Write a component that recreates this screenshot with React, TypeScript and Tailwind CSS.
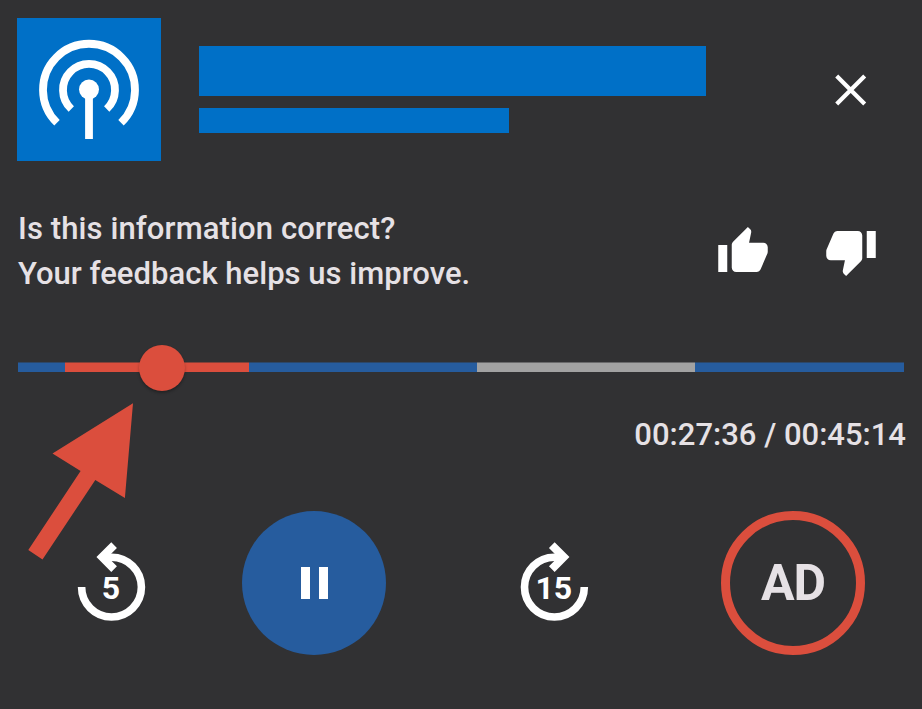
const THUMB_UP =
  "M1 21h4V9H1v12zm22-11c0-1.1-.9-2-2-2h-6.31l.95-4.57.03-.32c0-.41-.17-.79-.44-1.06L14.17 1 7.59 7.59C7.22 7.95 7 8.45 7 9v10c0 1.1.9 2 2 2h9c.83 0 1.54-.5 1.84-1.22l3.02-7.05c.09-.23.14-.47.14-.73v-2z";

const SEGMENTS = [
  { id: "intro", size: "w-[47px]", color: "bg-[#265c9e]" },
  { id: "ad", size: "w-[184px]", color: "bg-[#db4e3d]" },
  { id: "main", size: "w-[228px]", color: "bg-[#265c9e]" },
  { id: "pending", size: "w-[218px]", color: "bg-[#a2a2a2]" },
  { id: "outro", size: "flex-1", color: "bg-[#265c9e]" },
];

function PodcastLogo() {
  return (
    <div className="h-[143px] w-[144px] shrink-0 bg-[#0070c7]">
      <svg viewBox="17 18 144 143" className="h-full w-full" fill="none" stroke="#fff" strokeWidth="7.8">
        <path d="M57 122.8A46 46 0 1 1 121 122.8" />
        <path d="M71.3 109A26 26 0 1 1 106.7 109" />
        <circle cx="89" cy="89.5" r="10" fill="#fff" stroke="none" />
        <path d="M89 90V139" />
      </svg>
    </div>
  );
}

function SkipButton({ seconds, forward = false }: { seconds: number; forward?: boolean }) {
  return (
    <button aria-label={`Skip ${seconds} seconds`} className="grid h-20 w-[69px] place-items-center">
      <svg viewBox="0 0 69 80" className="col-start-1 row-start-1 h-20 w-[69px]" fill="none" stroke="#fff" strokeWidth="7.6">
        <g transform={forward ? "translate(68.3 0) scale(-1 1)" : "translate(0.6 0)"}>
          <path d="M4 46.1A29.9 29.9 0 1 0 33.9 16.2H27" />
          <path d="M36.5 4.1L24.5 16.1L36.5 28.1" strokeWidth="8" />
        </g>
      </svg>
      <span
        className={`col-start-1 row-start-1 pt-[13px] text-[32px] leading-8 font-bold text-white ${
          forward ? "pr-[1.5px]" : "pr-px"
        }`}
      >
        {seconds}
      </span>
    </button>
  );
}

export default function App() {
  return (
    <main className="relative flex h-[709px] w-[922px] flex-col overflow-hidden bg-[#313133] pt-[18px] pr-[18px] pl-[17px] font-['Roboto',sans-serif] text-[#e6e1e5]">
      <header className="flex h-[143px] items-start">
        <PodcastLogo />
        <div className="ml-[38px] flex flex-col gap-3 pt-7">
          <div className="h-[50px] w-[507px] bg-[#0070c7]" />
          <div className="h-[25px] w-[310px] bg-[#0070c7]" />
        </div>
        <button aria-label="Close" className="mt-14 mr-[37px] ml-auto">
          <svg viewBox="0 0 32 32" className="h-8 w-8" stroke="#fff" strokeWidth="4.2">
            <path d="M1.7 2L29.7 30M29.7 2L1.7 30" />
          </svg>
        </button>
      </header>

      <section className="mt-[45px] flex h-[90px] items-start justify-between pl-[1px]">
        <div className="text-[31px] leading-[45px] font-medium whitespace-nowrap">
          <p className="tracking-[0.11px]">Is this information correct?</p>
          <p className="tracking-[0.03px]">Your feedback helps us improve.</p>
        </div>
        <div className="mr-7 flex gap-[58px] pt-[21px]">
          <button aria-label="Correct" className="h-[45px] w-[50px]">
            <svg viewBox="1 1 22 20" className="h-[45px] w-[50px]" fill="#fff">
              <path d={THUMB_UP} />
            </svg>
          </button>
          <button aria-label="Incorrect" className="mt-1 h-[45px] w-[50px]">
            <svg viewBox="1 1 22 20" className="h-[45px] w-[50px] rotate-180" fill="#fff">
              <path d={THUMB_UP} />
            </svg>
          </button>
        </div>
      </section>

      <div className="relative mt-[66px] ml-[1px] flex h-[10px]">
        {SEGMENTS.map((s) => (
          <div key={s.id} className={`h-full border-t border-[#313133]/50 ${s.size} ${s.color}`} />
        ))}
        <div className="absolute top-[-17px] left-[121px] h-[46px] w-[46px] rounded-full bg-[#db4e3d] shadow-[0_2px_3px_rgba(0,0,0,0.3)]" />
      </div>

      <p className="mt-[40px] -mr-0.5 text-right text-[31px] leading-[45px] font-medium">00:27:36 / 00:45:14</p>

      <div className="mt-[54px] flex h-36 items-center pl-[60px]">
        <div className="-mt-1">
          <SkipButton seconds={5} />
        </div>
        <button aria-label="Pause" className="ml-[96px] flex h-36 w-36 items-center justify-center gap-[9px] rounded-full bg-[#265c9e]">
          <span className="h-8 w-[9px] bg-white" />
          <span className="h-8 w-[9px] bg-white" />
        </button>
        <div className="-mt-1 ml-[134px]">
          <SkipButton seconds={15} forward />
        </div>
        <button className="ml-[132px] flex h-36 w-36 items-center justify-center rounded-full border-[9px] border-[#db4e3d] text-[50px] font-bold tracking-[-1px]">
          AD
        </button>
      </div>

      <svg viewBox="0 0 106 158" className="absolute top-[402px] left-[28px] h-[158px] w-[106px]" fill="#db4e3d">
        <path d="M105 1.3L96.9 96L67.3 78L14.5 157.5L0.3 148L52.6 69L24.5 51.5Z" />
      </svg>
    </main>
  );
}
